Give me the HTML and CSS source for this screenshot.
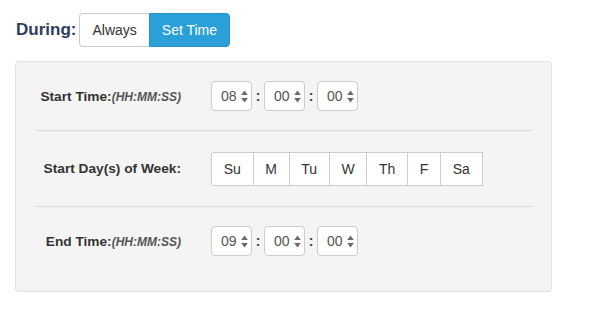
FILE: index.html
```html
<!DOCTYPE html>
<html>
<head>
<meta charset="utf-8">
<link rel="stylesheet" href="styles.css">
</head>
<body>
<div class="header">
  <span class="during">During:</span>
  <div class="toggle">
    <span class="tbtn">Always</span>
    <span class="tbtn active">Set Time</span>
  </div>
</div>
<div class="panel">
  <div class="row row-a">
    <div class="label">Start Time:<em>(HH:MM:SS)</em></div>
    <div class="controls">
      <div class="tbox"><span>08</span><svg class="spin" width="7" height="13" viewBox="0 0 7 13"><path d="M3.5 0.5 L6.8 5 L0.2 5 Z M3.5 12.5 L6.8 8 L0.2 8 Z" fill="#6a6a6a"/></svg></div>
      <span class="colon">:</span>
      <div class="tbox"><span>00</span><svg class="spin" width="7" height="13" viewBox="0 0 7 13"><path d="M3.5 0.5 L6.8 5 L0.2 5 Z M3.5 12.5 L6.8 8 L0.2 8 Z" fill="#6a6a6a"/></svg></div>
      <span class="colon">:</span>
      <div class="tbox"><span>00</span><svg class="spin" width="7" height="13" viewBox="0 0 7 13"><path d="M3.5 0.5 L6.8 5 L0.2 5 Z M3.5 12.5 L6.8 8 L0.2 8 Z" fill="#6a6a6a"/></svg></div>
    </div>
  </div>
  <div class="row row-b">
    <div class="label">Start Day(s) of Week:</div>
    <div class="controls">
      <div class="days">
        <span class="day">Su</span><span class="day">M</span><span class="day">Tu</span><span class="day">W</span><span class="day">Th</span><span class="day">F</span><span class="day">Sa</span>
      </div>
    </div>
  </div>
  <div class="row row-c">
    <div class="label">End Time:<em>(HH:MM:SS)</em></div>
    <div class="controls">
      <div class="tbox"><span>09</span><svg class="spin" width="7" height="13" viewBox="0 0 7 13"><path d="M3.5 0.5 L6.8 5 L0.2 5 Z M3.5 12.5 L6.8 8 L0.2 8 Z" fill="#6a6a6a"/></svg></div>
      <span class="colon">:</span>
      <div class="tbox"><span>00</span><svg class="spin" width="7" height="13" viewBox="0 0 7 13"><path d="M3.5 0.5 L6.8 5 L0.2 5 Z M3.5 12.5 L6.8 8 L0.2 8 Z" fill="#6a6a6a"/></svg></div>
      <span class="colon">:</span>
      <div class="tbox"><span>00</span><svg class="spin" width="7" height="13" viewBox="0 0 7 13"><path d="M3.5 0.5 L6.8 5 L0.2 5 Z M3.5 12.5 L6.8 8 L0.2 8 Z" fill="#6a6a6a"/></svg></div>
    </div>
  </div>
</div>
</body>
</html>
```

FILE: styles.css
```css
* { box-sizing: border-box; }
html, body { margin: 0; padding: 0; background: #fff; }
body {
  font-family: "Liberation Sans", Arial, Helvetica, sans-serif;
  color: #333;
  width: 597px;
  height: 310px;
  overflow: hidden;
}
.header {
  display: flex;
  align-items: center;
  padding: 13px 0 0 16px;
  height: 47px;
}
.during {
  font-weight: bold;
  font-size: 17px;
  color: #2f3b60;
  margin-right: 3px;
}
.toggle {
  display: flex;
  height: 34px;
}
.tbtn {
  display: flex;
  align-items: center;
  padding: 0 12px;
  font-size: 14px;
  color: #333;
  border: 1px solid #ccc;
  background: #fff;
  white-space: nowrap;
}
.tbtn:first-child {
  border-radius: 4px 0 0 4px;
  border-right: none;
}
.tbtn.active {
  background: #2a9fd8;
  border-color: #2592c8;
  color: #fff;
  border-radius: 0 4px 4px 0;
}
.panel {
  margin: 14px 0 0 15px;
  width: 537px;
  height: 231px;
  background: #f4f4f4;
  border: 1px solid #e2e2e2;
  border-radius: 4px;
  padding: 0 18px 0 19px;
}
.row {
  display: flex;
  align-items: center;
}
.row-a { height: 69px; border-bottom: 1px solid #dcdcdc; }
.row-b { height: 76px; border-bottom: 1px solid #dcdcdc; }
.row-c { height: 68px; }
.label {
  width: 146px;
  text-align: right;
  font-weight: bold;
  font-size: 13.7px;
  color: #333;
  white-space: nowrap;
}
.label em {
  font-size: 12px;
  color: #555;
  font-style: italic;
}
.controls {
  margin-left: 30px;
  display: flex;
  align-items: center;
}
.tbox {
  width: 41px;
  height: 30px;
  background: #fff;
  border: 1px solid #ccc;
  border-radius: 4px;
  display: flex;
  align-items: center;
  padding-left: 9px;
  font-size: 14px;
  color: #555;
}
.tbox span { width: 20px; }
.spin { display: block; }
.colon {
  width: 12px;
  text-align: center;
  font-size: 14px;
  font-weight: bold;
  color: #444;
}
.days {
  display: flex;
  height: 34px;
}
.day {
  display: flex;
  align-items: center;
  justify-content: center;
  padding: 0 11.7px;
  font-size: 14px;
  color: #333;
  background: #fff;
  border: 1px solid #ccc;
  margin-left: -1px;
}
.day:first-child { margin-left: 0; border-radius: 3px 0 0 3px; }
```
